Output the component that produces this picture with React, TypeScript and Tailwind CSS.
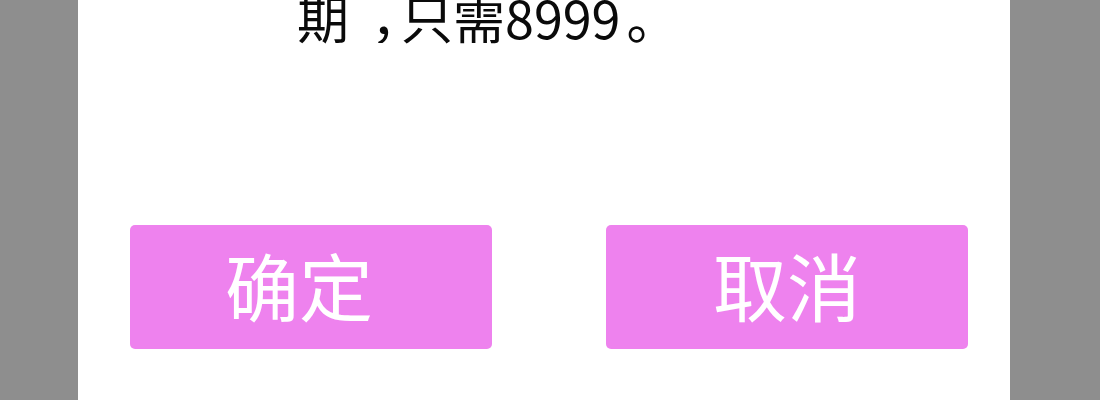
export default function App() {
  const font = { fontFamily: '"Noto Sans CJK SC", "Noto Sans", sans-serif' };
  return (
    <div className="flex h-[400px] w-[1100px] overflow-hidden bg-[#8e8e8e]" style={font}>
      <div className="ml-[78px] flex h-full w-[932px] flex-col bg-white">
        <p className="mt-[-9px] whitespace-nowrap pl-[219px] text-[52px] leading-[52px] text-[#0a0a0a]">
          期<span className="inline-block w-[52px] overflow-hidden pl-[22px] align-top">，</span>只需8999<span className="ml-[6px] inline-block">。</span>
        </p>
        <div className="mt-[182px] flex gap-[114px] pl-[52px]">
          <button className="flex h-[124px] w-[362px] items-center justify-center rounded-[5px] bg-[#ee82ee] pb-[6px] pr-[24px] text-[74px] leading-none text-white">
            确定
          </button>
          <button className="flex h-[124px] w-[362px] items-center justify-center rounded-[5px] bg-[#ee82ee] pb-[6px] text-[74px] leading-none text-white">
            取消
          </button>
        </div>
      </div>
    </div>
  );
}
